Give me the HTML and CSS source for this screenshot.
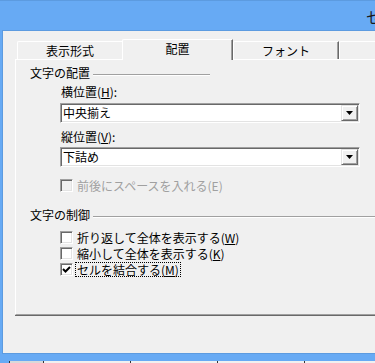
FILE: index.html
```html
<!DOCTYPE html>
<html lang="ja">
<head>
    <meta charset="UTF-8">
    <meta name="viewport" content="width=device-width, initial-scale=1.0">
    <title>セルの書式設定</title>
    <link rel="stylesheet" href="styles.css">
</head>
<body>

    <div class="window">
        <div class="titlebar"><span class="title">セ</span></div>

        <div class="client">
            <div class="tabs">
                <div class="tab before-active">表示形式</div>
                <div class="tab active">配置</div>
                <div class="tab">フォント</div>
                <div class="tab wide"></div>
            </div>

            <div class="panel">
                <div class="group-title first">
                    <span>文字の配置</span>
                    <span class="rule short"></span>
                </div>

                <div class="field-label label-h">横位置(<u>H</u>):</div>
                <div class="combo combo-h">
                    <span class="combo-text">中央揃え</span>
                    <span class="combo-btn">
                        <svg width="7" height="4" viewBox="0 0 7 4"><polygon points="0,0 7,0 3.5,4" fill="#000"/></svg>
                    </span>
                </div>

                <div class="field-label label-v">縦位置(<u>V</u>):</div>
                <div class="combo combo-v">
                    <span class="combo-text">下詰め</span>
                    <span class="combo-btn">
                        <svg width="7" height="4" viewBox="0 0 7 4"><polygon points="0,0 7,0 3.5,4" fill="#000"/></svg>
                    </span>
                </div>

                <div class="check disabled space-row">
                    <span class="box"></span>
                    <span class="check-label">前後にスペースを入れる(E)</span>
                </div>

                <div class="group-title second">
                    <span>文字の制御</span>
                    <span class="rule long"></span>
                </div>

                <div class="check first-check">
                    <span class="box"></span>
                    <span class="check-label">折り返して全体を表示する(<u>W</u>)</span>
                </div>
                <div class="check">
                    <span class="box"></span>
                    <span class="check-label">縮小して全体を表示する(<u>K</u>)</span>
                </div>
                <div class="check">
                    <span class="box">
                        <svg width="11" height="11" viewBox="0 0 11 11"><polyline points="2,5 4.5,7.5 9,3" fill="none" stroke="#000" stroke-width="2"/></svg>
                    </span>
                    <span class="check-label focused">セルを結合する(<u>M</u>)</span>
                </div>
            </div>
        </div>

        <div class="frame-bottom"></div>
        <div class="strip">
            <span class="seg seg-blue"></span>
            <span class="seg seg-dark"></span>
            <span class="seg"></span>
            <span class="seg"></span>
            <span class="seg"></span>
            <span class="seg"></span>
        </div>
    </div>

</body>
</html>
```

FILE: styles.css
```css
body {
    margin: 0;
    width: 375px;
    height: 363px;
    overflow: hidden;
    background-color: #67aaf4;
    font-family: "Noto Sans CJK JP", "Noto Sans", sans-serif;
    font-size: 12px;
    color: #000;
}
.window {
    width: 840px;
    background-color: #67aaf4;
}
.titlebar {
    height: 30px;
    box-sizing: border-box;
    border-top: 1px solid #5c9be0;
    padding: 2px 0 0 366px;
    display: flex;
    align-items: center;
}
.title {
    font-size: 15px;
    line-height: 16px;
    color: #1b1b1b;
}
.client {
    margin-left: 2px;
    height: 324px;
    box-sizing: border-box;
    border: 1px solid #5c9be0;
    border-right: none;
    background-color: #f0f0f0;
    padding: 8px 0 0 12px;
}
.tabs {
    display: flex;
    align-items: flex-end;
    height: 20px;
    margin-left: 2px;
}
.tab {
    width: 106px;
    height: 18px;
    box-sizing: border-box;
    border-top: 1px solid #fff;
    border-left: 1px solid #fff;
    border-right: 1px solid #696969;
    box-shadow: inset -1px 0 0 #a0a0a0;
    border-top-left-radius: 2px;
    display: flex;
    align-items: center;
    justify-content: center;
    line-height: 14px;
}
.tab.before-active {
    width: 105px;
    border-right: none;
    box-shadow: none;
}
.tab.active {
    width: 111px;
    height: 21px;
    margin-bottom: -1px;
    position: relative;
    z-index: 1;
    background-color: #f0f0f0;
    padding-bottom: 2px;
}
.tab.wide {
    width: 120px;
}
.panel {
    height: 256px;
    box-sizing: border-box;
    border-top: 1px solid #fff;
    border-left: 1px solid #fff;
    border-bottom: 1px solid #a0a0a0;
    box-shadow: 0 1px 0 #696969;
    display: flex;
    flex-direction: column;
}
.group-title {
    display: flex;
    align-items: center;
    height: 14px;
    line-height: 14px;
    margin-left: 14px;
}
.group-title.first {
    margin-top: 6px;
}
.group-title.second {
    margin-top: 15px;
}
.rule {
    margin: 4px 0 0 3px;
    height: 0;
    border-top: 1px solid #a0a0a0;
    border-bottom: 1px solid #fff;
}
.rule.short {
    width: 117px;
}
.rule.long {
    flex: 1;
}
.field-label {
    height: 14px;
    line-height: 14px;
    margin-left: 45px;
}
.label-h {
    margin-top: 5px;
}
.label-v {
    margin-top: 7px;
}
.combo {
    width: 300px;
    height: 20px;
    box-sizing: border-box;
    margin-left: 44px;
    border: 1px solid;
    border-color: #a0a0a0 #fff #fff #a0a0a0;
    box-shadow: inset 1px 1px 0 #696969, inset -1px -1px 0 #e3e3e3;
    background-color: #fff;
    display: flex;
    align-items: center;
    padding: 0 1px 0 2px;
    line-height: 14px;
}
.combo-h {
    margin-top: 4px;
}
.combo-v {
    margin-top: 3px;
}
.combo-text {
    flex: 1;
}
.combo-btn {
    width: 17px;
    height: 16px;
    box-sizing: border-box;
    border: 1px solid;
    border-color: #e3e3e3 #696969 #696969 #e3e3e3;
    box-shadow: inset 1px 1px 0 #fff, inset -1px -1px 0 #a0a0a0;
    background-color: #f0f0f0;
    display: flex;
    align-items: center;
    justify-content: center;
}
.check {
    display: flex;
    align-items: center;
    height: 16px;
    margin-left: 44px;
}
.space-row {
    margin-top: 10px;
}
.first-check {
    margin-top: 7px;
}
.box {
    width: 13px;
    height: 13px;
    box-sizing: border-box;
    border: 1px solid;
    border-color: #a0a0a0 #fff #fff #a0a0a0;
    box-shadow: inset 1px 1px 0 #696969, inset -1px -1px 0 #e3e3e3;
    background-color: #fff;
    display: flex;
}
.check.disabled .box {
    background-color: #f0f0f0;
}
.check.disabled .check-label {
    color: #a0a0a0;
}
.check-label {
    margin-left: 2px;
    padding: 0 1px;
    line-height: 13px;
    border: 1px dotted transparent;
}
.check-label.focused {
    border-color: #000;
}
.frame-bottom {
    height: 7px;
}
.strip {
    display: flex;
    height: 2px;
    background-color: #f0f0f0;
}
.seg {
    width: 86px;
    border-left: 1px solid #333;
}
.seg-blue {
    width: 9px;
    border-left: none;
    background-color: #67aaf4;
}
.seg-dark {
    width: 33px;
    background-color: #d9d9d9;
}
```
